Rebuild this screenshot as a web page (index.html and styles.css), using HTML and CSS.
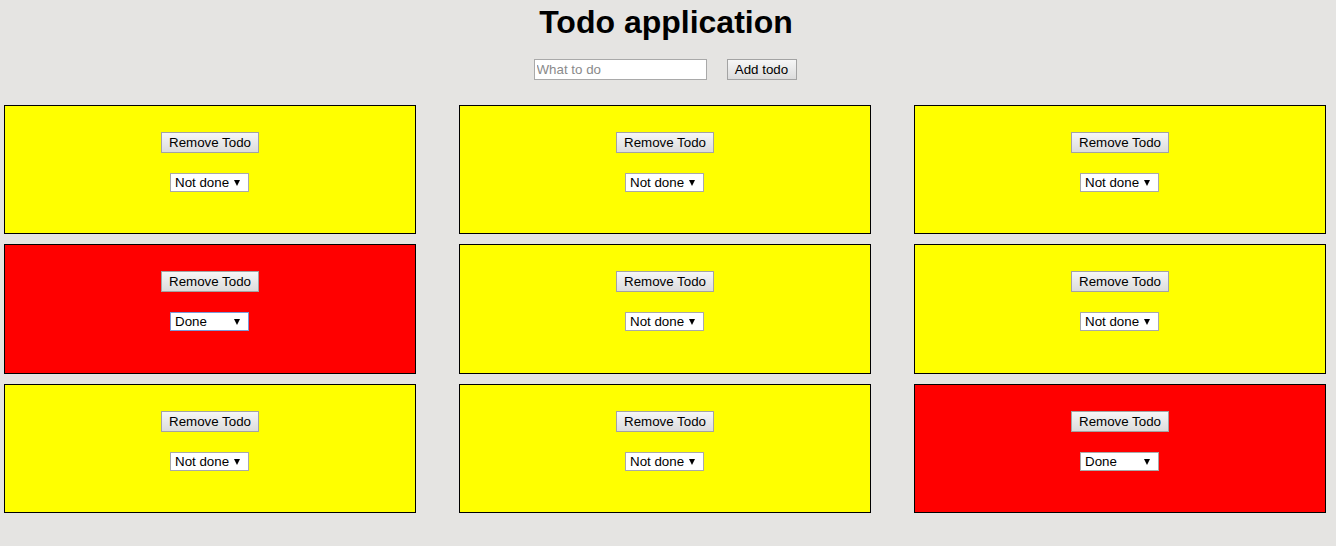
FILE: index.html
```html
<!DOCTYPE html>
<html>
<head>
<meta charset="utf-8">
<title>Todo application</title>
<link rel="stylesheet" href="styles.css">
</head>
<body>
<header class="top">
  <h1 class="title">Todo application</h1>
  <form class="add-form">
    <input class="todo-input" type="text" placeholder="What to do">
    <button class="btn add-btn" type="button">Add todo</button>
  </form>
</header>
<main class="grid">
  <div class="card pending"><button class="btn" type="button">Remove Todo</button><span class="sel"><span class="sel-text">Not done</span></span></div>
  <div class="card pending"><button class="btn" type="button">Remove Todo</button><span class="sel"><span class="sel-text">Not done</span></span></div>
  <div class="card pending"><button class="btn" type="button">Remove Todo</button><span class="sel"><span class="sel-text">Not done</span></span></div>
  <div class="card done"><button class="btn" type="button">Remove Todo</button><span class="sel focused"><span class="sel-text">Done</span></span></div>
  <div class="card pending"><button class="btn" type="button">Remove Todo</button><span class="sel"><span class="sel-text">Not done</span></span></div>
  <div class="card pending"><button class="btn" type="button">Remove Todo</button><span class="sel"><span class="sel-text">Not done</span></span></div>
  <div class="card pending"><button class="btn" type="button">Remove Todo</button><span class="sel"><span class="sel-text">Not done</span></span></div>
  <div class="card pending"><button class="btn" type="button">Remove Todo</button><span class="sel"><span class="sel-text">Not done</span></span></div>
  <div class="card done"><button class="btn" type="button">Remove Todo</button><span class="sel"><span class="sel-text">Done</span></span></div>
</main>
</body>
</html>
```
FILE: styles.css
```css
html, body {
  margin: 0;
  padding: 0;
  background: #e5e4e2;
  font-family: "Liberation Sans", Arial, sans-serif;
  color: #000;
}
.top {
  display: flex;
  flex-direction: column;
  align-items: center;
  padding-top: 4px;
}
.title {
  margin: 0;
  font-size: 32px;
  font-weight: bold;
  line-height: 37px;
  padding-right: 4px;
}
.add-form {
  display: flex;
  gap: 20px;
  margin-top: 18px;
  margin-left: -6px;
}
.todo-input {
  box-sizing: border-box;
  width: 173px;
  height: 21px;
  margin: 0;
  padding: 1px 2px;
  border: 1px solid #a9a9a9;
  background: #fff;
  font-family: "Liberation Sans", Arial, sans-serif;
  font-size: 13.33px;
  outline: none;
}
.todo-input::placeholder {
  color: #8a8a8a;
}
.btn {
  box-sizing: border-box;
  height: 21px;
  margin: 0;
  padding: 0 7px;
  border: 1px solid #a3a3a3;
  border-radius: 0;
  background: linear-gradient(#f6f6f6, #dcdcdc);
  font-family: "Liberation Sans", Arial, sans-serif;
  font-size: 13.33px;
  color: #000;
  line-height: 19px;
}
.add-btn {
  width: 70px;
  padding: 0;
}
.grid {
  display: grid;
  grid-template-columns: repeat(3, 412px);
  grid-template-rows: 129px 130px 129px;
  column-gap: 43px;
  row-gap: 10px;
  padding: 25px 0 0 4px;
}
.card {
  box-sizing: border-box;
  border: 1px solid #000;
  display: flex;
  flex-direction: column;
  align-items: center;
  padding-top: 26px;
}
.card .btn {
  width: 98px;
  padding: 0;
}
.pending { background: #ffff00; }
.done { background: #ff0000; }
.sel {
  position: relative;
  box-sizing: border-box;
  display: block;
  width: 79px;
  height: 19px;
  margin-top: 20px;
  margin-right: 1px;
  border: 1px solid #a9a9a9;
  background: #fff;
  font-size: 13.33px;
  line-height: 17px;
  padding-left: 4px;
}
.sel.focused {
  border-color: #7b98d6;
}
.sel::after {
  content: "";
  position: absolute;
  right: 8px;
  top: 6px;
  border-left: 3px solid transparent;
  border-right: 3px solid transparent;
  border-top: 6px solid #000;
}
```
